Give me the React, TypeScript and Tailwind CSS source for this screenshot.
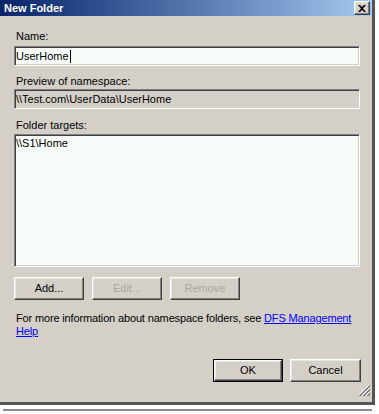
const font = "font-['Liberation_Sans',Arial,sans-serif]"

const sunken =
  'border border-t-[#808080] border-l-[#808080] border-r-white border-b-white shadow-[inset_1px_1px_0_#404040,inset_-1px_-1px_0_#d4d0c8]'

const raised =
  'border border-t-white border-l-white border-r-[#404040] border-b-[#404040] shadow-[inset_-1px_-1px_0_#808080,inset_1px_1px_0_#e8e6e0]'

function Button({
  label,
  disabled,
  isDefault,
  width = 'w-[70px]',
}: {
  label: string
  disabled?: boolean
  isDefault?: boolean
  width?: string
}) {
  const face = (
    <div
      className={`flex h-full w-full items-center justify-center bg-[#d4d0c8] ${raised} ${
        disabled ? 'text-[#a9a79f]' : 'text-black'
      }`}
    >
      {label}
    </div>
  )
  if (isDefault) {
    return <div className={`${width} h-[23px] border border-black`}>{face}</div>
  }
  return <div className={`${width} h-[23px]`}>{face}</div>
}

function CloseButton() {
  return (
    <div className={`flex h-[14px] w-[16px] items-center justify-center bg-[#d4d0c8] ${raised}`}>
      <svg width="8" height="7" viewBox="0 0 8 7">
        <path d="M0 0h2l2 2 2-2h2L5 3.5 8 7H6L4 5 2 7H0l3-3.5z" fill="#000" />
      </svg>
    </div>
  )
}

function SizeGrip() {
  return (
    <svg width="12" height="12" viewBox="0 0 12 12">
      <g strokeWidth="1">
        <path d="M11 1L1 11" stroke="#fff" />
        <path d="M12 1L1 12M12 2L2 12" stroke="#808080" />
        <path d="M11 5L5 11" stroke="#fff" />
        <path d="M12 5L5 12M12 6L6 12" stroke="#808080" />
        <path d="M11 9L9 11" stroke="#fff" />
        <path d="M12 9L9 12M12 10L10 12" stroke="#808080" />
      </g>
    </svg>
  )
}

export default function App() {
  return (
    <div className={`h-[414px] w-[379px] bg-white text-[11px] leading-[13px] text-black ${font}`}>
      <div className="flex h-[405px] w-[375px] flex-col border-r-[3px] border-b-[3px] border-[#555555] bg-[#d4d0c8]">
        {/* title bar */}
        <div className="flex h-[16px] items-center justify-between bg-gradient-to-r from-[#0a246a] to-[#a6caf0] pr-[2px] pl-[4px]">
          <span className="text-[11px] font-bold text-white">New Folder</span>
          <CloseButton />
        </div>

        <div className="flex flex-1 flex-col pt-[14px] pr-[12px] pl-[14px]">
          <div className="pl-[2px]">Name:</div>
          <div className={`mt-[3px] flex h-[20px] items-center bg-[#f8fcf9] pl-[1px] ${sunken}`}>
            <span>UserHome</span>
            <span className="ml-px h-[13px] w-px bg-black" />
          </div>

          <div className="mt-[9px] pl-[2px]">Preview of namespace:</div>
          <div className={`mt-[1px] flex h-[20px] items-center bg-[#d4d0c8] pl-[1px] ${sunken}`}>
            \\Test.com\UserData\UserHome
          </div>

          <div className="mt-[10px] pl-[2px]">Folder targets:</div>
          <div className={`mt-[2px] h-[133px] bg-[#f8fcf9] pt-[2px] pl-[1px] ${sunken}`}>
            \\S1\Home
          </div>

          <div className="mt-[10px] flex gap-[8px]">
            <Button label="Add..." />
            <Button label="Edit..." disabled />
            <Button label="Remove" disabled />
          </div>

          <p className="mt-[12px] pl-[2px] tracking-[-0.15px]">
            For more information about namespace folders, see{' '}
            <a className="text-[#0000ff] underline">DFS Management Help</a>
          </p>

          <div className="mt-[21px] -mr-px flex justify-end gap-[7px]">
            <Button label="OK" isDefault />
            <Button label="Cancel" width="w-[71px]" />
          </div>

          <div className="mt-auto -mr-[10px] mb-[6px] flex justify-end">
            <SizeGrip />
          </div>
        </div>
      </div>
      <div className="mt-[4px] ml-[3px] h-[2px] w-[369px] bg-[#8c8c8c]" />
    </div>
  )
}
